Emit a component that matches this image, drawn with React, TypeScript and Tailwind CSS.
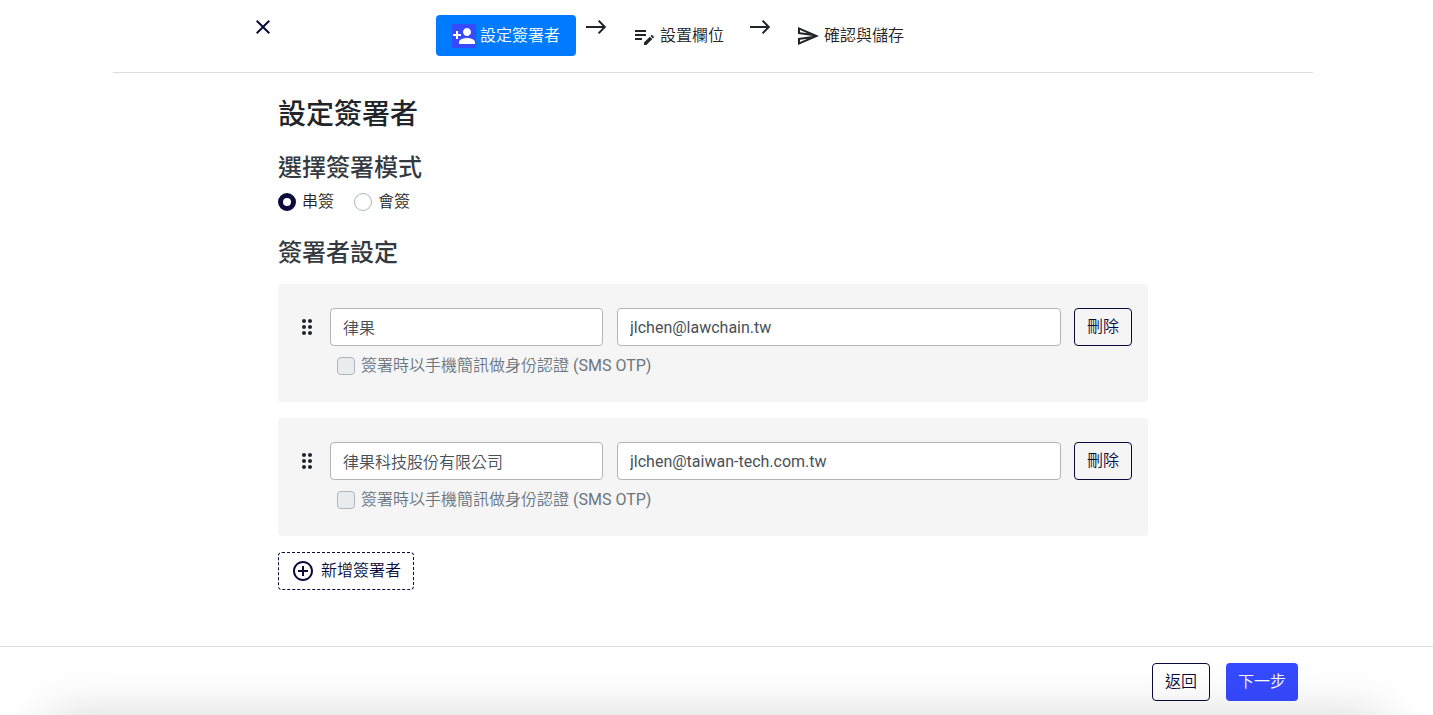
import { useState } from "react";
import {
  MdAddCircleOutline,
  MdClose,
  MdDragIndicator,
  MdOutlineSend,
  MdPersonAdd,
} from "react-icons/md";

interface Signer {
  id: number;
  name: string;
  email: string;
}

const initialSigners: Signer[] = [
  { id: 1, name: "律果", email: "jlchen@lawchain.tw" },
  { id: 2, name: "律果科技股份有限公司", email: "jlchen@taiwan-tech.com.tw" },
];

function StepArrow() {
  return (
    <svg
      viewBox="0 0 24 24"
      className="size-6 shrink-0 text-[#212529]"
      fill="none"
      stroke="currentColor"
      strokeWidth="2"
      aria-hidden="true"
    >
      <path d="M2 12h18M14.6 5.6L20.8 12l-6.2 6.4" />
    </svg>
  );
}

function EditFieldsIcon() {
  return (
    <svg
      viewBox="0 0 24 24"
      className="size-6 shrink-0"
      fill="currentColor"
      aria-hidden="true"
    >
      <path d="M3 6h11v2H3zM3 10h11v2H3zM3 14h7v2H3z" />
      <path d="M12 21v-2.4l5.9-5.9 2.4 2.4-5.9 5.9zM18.6 12l.7-.7c.3-.3.8-.3 1.1 0l1.3 1.3c.3.3.3.8 0 1.1l-.7.7z" />
    </svg>
  );
}

function Header() {
  return (
    <header className="mx-auto flex max-w-[1200px] items-start border-b border-[#dcdcdc] pt-[15px] pb-4 pl-[138px]">
      <button type="button" aria-label="關閉" className="text-[#0a0a3c]">
        <MdClose size={24} />
      </button>
      <nav className="ml-[161px] flex items-start font-[350]">
        <a
          href="#signers"
          aria-current="step"
          className="flex h-[41px] items-center gap-1 rounded bg-[#007bff] px-4 text-white"
        >
          <MdPersonAdd size={24} className="bg-[#364aff]" />
          設定簽署者
        </a>
        <span className="ml-2">
          <StepArrow />
        </span>
        <a href="#fields" className="ml-2 flex h-[41px] items-center gap-1 px-4">
          <EditFieldsIcon />
          設置欄位
        </a>
        <span className="ml-2">
          <StepArrow />
        </span>
        <a href="#confirm" className="ml-2 flex h-[41px] items-center gap-1 px-4">
          <MdOutlineSend size={24} />
          確認與儲存
        </a>
      </nav>
    </header>
  );
}

interface ModeRadioProps {
  label: string;
  checked: boolean;
  onChange: () => void;
}

function ModeRadio({ label, checked, onChange }: ModeRadioProps) {
  return (
    <label className="flex items-center gap-[6px] font-[350]">
      <input
        type="radio"
        name="mode"
        checked={checked}
        onChange={onChange}
        className="size-[18px] appearance-none rounded-full border border-[#adb5bd] bg-white checked:border-[5px] checked:border-[#0a0a3c]"
      />
      {label}
    </label>
  );
}

interface SignerCardProps {
  signer: Signer;
  onChange: (signer: Signer) => void;
  onDelete: () => void;
}

function SignerCard({ signer, onChange, onDelete }: SignerCardProps) {
  const inputClass =
    "h-[38px] min-w-0 rounded border border-[#b5b5b5] bg-white px-3 text-[#495057]";

  return (
    <li className="flex items-start rounded bg-[#f5f5f5] pt-6 pr-4 pb-6 pl-[17px]">
      <MdDragIndicator size={24} className="mt-[7px] mr-[11px] shrink-0" />
      <div className="min-w-0 flex-1">
        <div className="flex">
          <input
            type="text"
            aria-label="姓名"
            value={signer.name}
            onChange={(e) => onChange({ ...signer, name: e.target.value })}
            className={`${inputClass} w-[273px] font-[350]`}
          />
          <input
            type="email"
            aria-label="電子郵件"
            value={signer.email}
            onChange={(e) => onChange({ ...signer, email: e.target.value })}
            className={`${inputClass} ml-[14px] flex-1`}
          />
          <button
            type="button"
            onClick={onDelete}
            className="ml-[13px] h-[38px] rounded border border-[#0a0a3c] px-3 font-[350] text-[#0a0a3c]"
          >
            刪除
          </button>
        </div>
        <label className="mt-2 ml-[7px] flex w-fit items-center gap-[6px] text-[#6c757d]">
          <input
            type="checkbox"
            disabled
            className="size-[18px] appearance-none rounded border border-[#adb5bd] bg-[#e9ecef]"
          />
          <span>
            <span className="font-[350]">簽署時以手機簡訊做身份認證</span> (SMS OTP)
          </span>
        </label>
      </div>
    </li>
  );
}

export default function App() {
  const [mode, setMode] = useState("serial");
  const [signers, setSigners] = useState(initialSigners);

  const updateSigner = (next: Signer) => {
    setSigners(signers.map((s) => (s.id === next.id ? next : s)));
  };

  const addSigner = () => {
    setSigners([...signers, { id: Date.now(), name: "", email: "" }]);
  };

  return (
    <div className="relative flex min-h-screen flex-col overflow-hidden bg-white font-[Roboto,'Noto_Sans_CJK_TC',sans-serif] text-base leading-6 text-[#212529]">
      <div className="flex-1 pr-[7px]">
        <Header />
        <main className="mx-auto max-w-[870px] pt-[26px]">
          <h1 className="text-[28px] leading-8 font-medium">設定簽署者</h1>

          <h2 className="mt-[23px] text-2xl leading-7 font-medium text-[#343a40]">
            選擇簽署模式
          </h2>
          <div className="mt-2 flex gap-5">
            <ModeRadio
              label="串簽"
              checked={mode === "serial"}
              onChange={() => setMode("serial")}
            />
            <ModeRadio
              label="會簽"
              checked={mode === "parallel"}
              onChange={() => setMode("parallel")}
            />
          </div>

          <h2 className="mt-[25px] text-2xl leading-7 font-medium text-[#343a40]">
            簽署者設定
          </h2>
          <ul className="mt-[17px] space-y-4">
            {signers.map((signer) => (
              <SignerCard
                key={signer.id}
                signer={signer}
                onChange={updateSigner}
                onDelete={() =>
                  setSigners(signers.filter((s) => s.id !== signer.id))
                }
              />
            ))}
          </ul>

          <button
            type="button"
            onClick={addSigner}
            className="mt-4 flex h-[38px] items-center gap-[6px] rounded border border-dashed border-[#0a0a3c] px-3 font-[350] text-[#0a0a3c]"
          >
            <MdAddCircleOutline size={24} />
            新增簽署者
          </button>
        </main>
      </div>

      <footer className="flex justify-end gap-4 border-t border-[#dcdcdc] pt-4 pr-[135px] pb-[14px] font-[350]">
        <button
          type="button"
          className="h-[38px] rounded border border-[#0a0a3c] px-3 text-[#0a0a3c]"
        >
          返回
        </button>
        <button
          type="button"
          className="h-[38px] rounded bg-[#364aff] px-3 text-white"
        >
          下一步
        </button>
      </footer>

      {/* soft shadow rising from the bottom edge */}
      <div className="pointer-events-none absolute inset-x-[50px] top-full h-20 shadow-[0_0_50px_rgba(0,0,0,0.16)]" />
    </div>
  );
}
